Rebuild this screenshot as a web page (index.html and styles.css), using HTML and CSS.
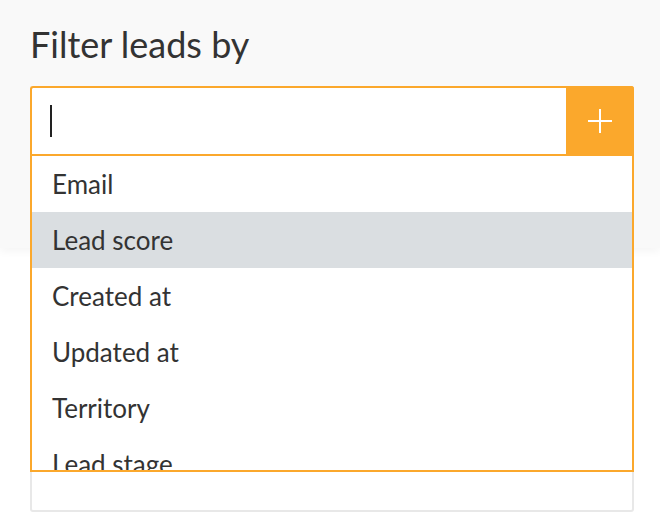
FILE: index.html
```html
<!DOCTYPE html>
<html lang="en">
<head>
    <meta charset="UTF-8">
    <meta name="viewport" content="width=device-width, initial-scale=1.0">
    <title>Filter leads</title>
    <link rel="stylesheet" href="styles.css">
</head>
<body>
    <div class="panel">
        <h1>Filter leads by</h1>
        <div class="combo">
            <div class="search">
                <div class="search-field"><span class="caret"></span></div>
                <button class="add-btn" aria-label="Add filter">
                    <svg width="26" height="26" viewBox="0 0 26 26">
                        <path d="M13 1v24M1 13h24" stroke="#ffffff" stroke-width="2" fill="none"/>
                    </svg>
                </button>
            </div>
            <ul class="menu">
                <li>Email</li>
                <li class="active">Lead score</li>
                <li>Created at</li>
                <li>Updated at</li>
                <li>Territory</li>
                <li>Lead stage</li>
            </ul>
        </div>
    </div>
    <div class="below">
        <div class="field"></div>
    </div>
</body>
</html>
```

FILE: styles.css
```css
* {
    margin: 0;
    padding: 0;
    box-sizing: border-box;
    font-family: 'Lato', sans-serif;
}

body {
    background-color: #ffffff;
    color: #333333;
}

.panel {
    height: 248px;
    padding: 24px 26px 0 30px;
    background-color: #f9f9f9;
    box-shadow: 0px 4px 8px rgba(0, 0, 0, 0.04);
    position: relative;
    z-index: 1;
}

h1 {
    font-size: 36px;
    font-weight: 400;
    line-height: 40px;
    color: #333333;
    margin-bottom: 22px;
}

.combo {
    position: relative;
    width: 604px;
}

.search {
    display: flex;
    height: 70px;
    background-color: #ffffff;
    border: 2px solid #fba82c;
    border-right: none;
    border-radius: 3px 3px 0 0;
}

.search-field {
    flex: 1;
    display: flex;
    align-items: center;
    padding-left: 18px;
}

.caret {
    width: 2px;
    height: 32px;
    background-color: #222222;
}

.add-btn {
    width: 68px;
    margin: -2px 0;
    border: none;
    border-radius: 0 3px 0 0;
    background-color: #fba82c;
    display: flex;
    align-items: center;
    justify-content: center;
}

.menu {
    position: absolute;
    top: 100%;
    left: 0;
    right: 0;
    height: 316px;
    list-style-type: none;
    overflow: hidden;
    background-color: #ffffff;
    border: 2px solid #fba82c;
    border-top: none;
}

.menu li {
    height: 56px;
    display: flex;
    align-items: center;
    padding-left: 20px;
    font-size: 26px;
    color: #333333;
}

.menu li.active {
    background-color: #dadee1;
}

.below {
    padding: 220px 26px 0 30px;
}

.field {
    width: 604px;
    height: 44px;
    border: 2px solid #e8e8e8;
    border-radius: 3px;
    background-color: #ffffff;
}
```
